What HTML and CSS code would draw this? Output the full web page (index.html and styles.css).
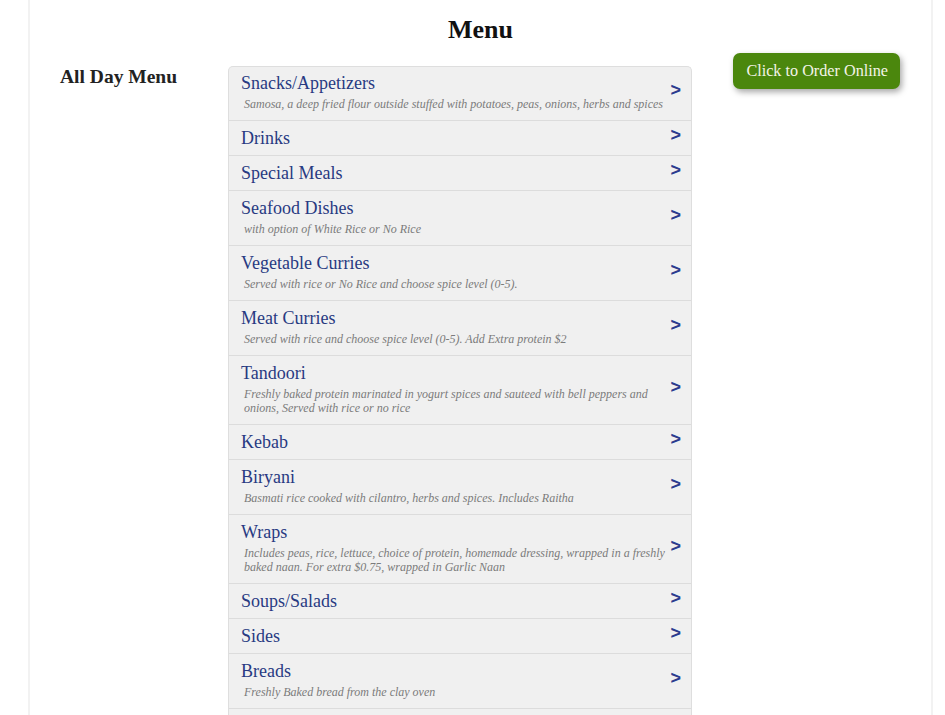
FILE: index.html
```html
<!DOCTYPE html>
<html>
<head>
<meta charset="utf-8">
<title>Menu</title>
<link rel="stylesheet" href="styles.css">
</head>
<body>
<div class="page">
  <h1 class="page-title">Menu</h1>
  <div class="layout">
    <h2 class="menu-name">All Day Menu</h2>
    <ul class="cats">
      <li class="cat"><div class="cat-body"><div class="cat-title">Snacks/Appetizers</div><div class="cat-desc">Samosa, a deep fried flour outside stuffed with potatoes, peas, onions, herbs and spices</div></div><span class="arrow">&gt;</span></li>
      <li class="cat"><div class="cat-body"><div class="cat-title">Drinks</div></div><span class="arrow">&gt;</span></li>
      <li class="cat"><div class="cat-body"><div class="cat-title">Special Meals</div></div><span class="arrow">&gt;</span></li>
      <li class="cat"><div class="cat-body"><div class="cat-title">Seafood Dishes</div><div class="cat-desc">with option of White Rice or No Rice</div></div><span class="arrow">&gt;</span></li>
      <li class="cat"><div class="cat-body"><div class="cat-title">Vegetable Curries</div><div class="cat-desc">Served with rice or No Rice and choose spice level (0-5).</div></div><span class="arrow">&gt;</span></li>
      <li class="cat"><div class="cat-body"><div class="cat-title">Meat Curries</div><div class="cat-desc">Served with rice and choose spice level (0-5). Add Extra protein $2</div></div><span class="arrow">&gt;</span></li>
      <li class="cat"><div class="cat-body"><div class="cat-title">Tandoori</div><div class="cat-desc">Freshly baked protein marinated in yogurt spices and sauteed with bell peppers and onions, Served with rice or no rice</div></div><span class="arrow">&gt;</span></li>
      <li class="cat"><div class="cat-body"><div class="cat-title">Kebab</div></div><span class="arrow">&gt;</span></li>
      <li class="cat"><div class="cat-body"><div class="cat-title">Biryani</div><div class="cat-desc">Basmati rice cooked with cilantro, herbs and spices. Includes Raitha</div></div><span class="arrow">&gt;</span></li>
      <li class="cat"><div class="cat-body"><div class="cat-title">Wraps</div><div class="cat-desc">Includes peas, rice, lettuce, choice of protein, homemade dressing, wrapped in a freshly baked naan. For extra $0.75, wrapped in Garlic Naan</div></div><span class="arrow">&gt;</span></li>
      <li class="cat"><div class="cat-body"><div class="cat-title">Soups/Salads</div></div><span class="arrow">&gt;</span></li>
      <li class="cat"><div class="cat-body"><div class="cat-title">Sides</div></div><span class="arrow">&gt;</span></li>
      <li class="cat"><div class="cat-body"><div class="cat-title">Breads</div><div class="cat-desc">Freshly Baked bread from the clay oven</div></div><span class="arrow">&gt;</span></li>
      <li class="cat"><div class="cat-body"><div class="cat-title">Desserts</div></div><span class="arrow">&gt;</span></li>
    </ul>
    <div class="order-col">
      <a class="order-btn" href="#">Click to Order Online</a>
    </div>
  </div>
</div>
</body>
</html>
```

FILE: styles.css
```css
html, body {
  margin: 0;
  padding: 0;
  background: #ffffff;
}
body {
  font-family: "Liberation Serif", "Times New Roman", serif;
  color: #222;
}
.page {
  margin-left: 28px;
  width: 905px;
  box-sizing: border-box;
  border-left: 2px solid #f2f2f2;
  border-right: 2px solid #f2f2f2;
  padding: 0 30px 40px 30px;
  min-height: 760px;
}
.page-title {
  margin: 0;
  padding-top: 15px;
  font-size: 26px;
  line-height: 30px;
  font-weight: bold;
  text-align: center;
  color: #111;
}
.layout {
  display: flex;
  align-items: flex-start;
  margin-top: 8px;
}
.menu-name {
  width: 168px;
  flex: none;
  margin: 13px 0 0 0;
  font-size: 19.5px;
  line-height: 22px;
  font-weight: bold;
  color: #222;
}
.cats {
  list-style: none;
  margin: 13px 0 0 0;
  padding: 0;
  width: 464px;
  box-sizing: border-box;
  flex: none;
  border: 1px solid #dedede;
  border-bottom: none;
  border-radius: 5px 5px 0 0;
  background: #f0f0f0;
}
.cat {
  display: flex;
  align-items: center;
  padding: 5px 10px 4px 12px;
  border-bottom: 1px solid #dcdcdc;
}
.cat:first-child {
  padding-top: 4px;
}
.cat-body {
  flex: 1;
  min-width: 0;
}
.cat-title {
  font-size: 18px;
  line-height: 25px;
  color: #283a82;
}
.cat-desc {
  margin: 1px 0 5px 3px;
  font-size: 12px;
  line-height: 14px;
  font-style: italic;
  color: #7b7b7b;
}
.arrow {
  flex: none;
  margin-left: 0;
  margin-top: -8px;
  font-family: "Liberation Sans", Arial, sans-serif;
  font-weight: bold;
  font-size: 18px;
  line-height: 20px;
  color: #2b3b8e;
}
.order-col {
  flex: 1;
  display: flex;
  justify-content: flex-end;
  padding-right: 1px;
}
.order-btn {
  display: block;
  padding: 0 12px 0 13px;
  height: 36px;
  line-height: 37px;
  font-size: 16.2px;
  color: #f4f4e8;
  text-decoration: none;
  background: #4b870d;
  border-radius: 7px;
  box-shadow: 2px 3px 6px rgba(0, 0, 0, 0.35);
}
```
